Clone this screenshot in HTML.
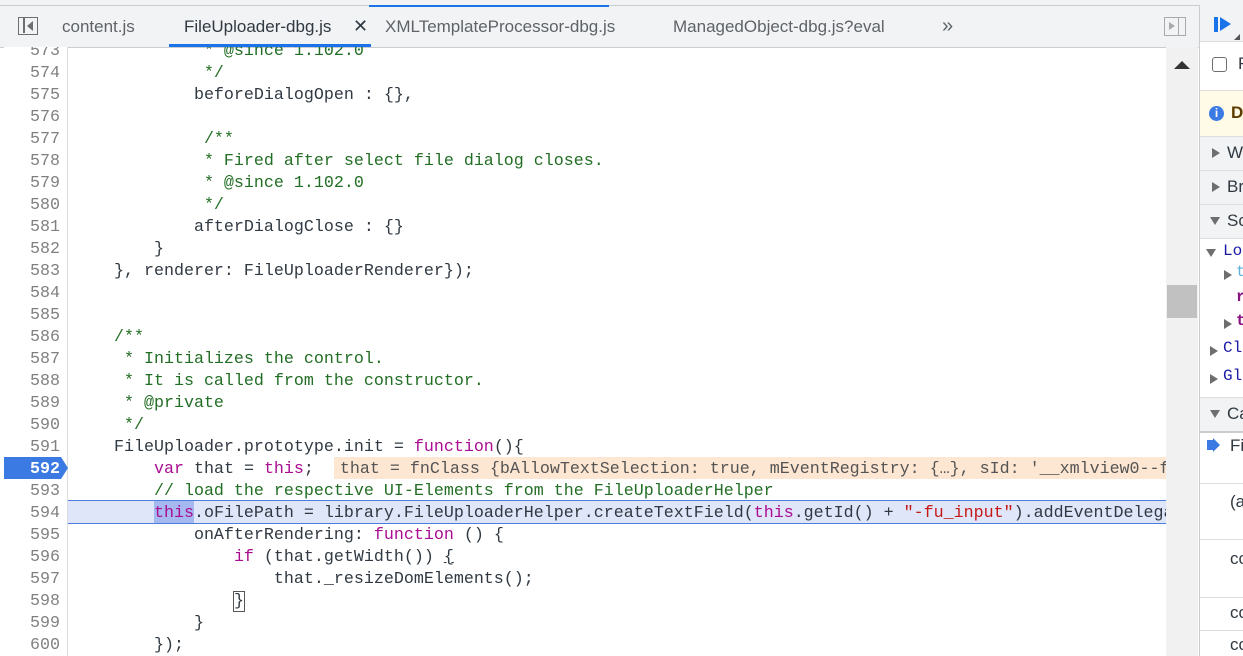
<!DOCTYPE html>
<html><head><meta charset="utf-8"><style>
body{margin:0;width:1243px;height:656px;overflow:hidden;background:#fff;font-family:"Liberation Sans",sans-serif;position:relative}
.tabs{position:absolute;left:0;top:5px;width:1199px;height:41px;background:#f1f3f4;border-top:1px solid #cacdd1;border-bottom:1px solid #cacdd1}
.topstrip{position:absolute;left:0;top:0;width:1243px;height:5px;background:#f1f3f4}
.tab{position:absolute;top:11px;font-size:17px;color:#5f6368}
.code{position:absolute;left:0;top:47px;width:1166px;height:609px;overflow:hidden}
.gut{position:absolute;left:4px;top:0;width:63px;height:609px;border-right:1px solid #ddd;background:#fff}
.ln{position:absolute;height:22px;line-height:22px;font-family:"Liberation Mono",monospace;font-size:16.67px;white-space:pre}
.num{left:4px;width:56px;text-align:right;color:#808080}
.txt{left:74px;color:#303942}
.c{color:#236e25}.k{color:#aa0d91}.s{color:#c41a16}
.sb{position:absolute;left:1166px;top:47px;width:32px;height:609px;background:#f1f1f1}
.rp{position:absolute;left:1199px;top:5px;width:44px;height:651px;border-left:1px solid #cacdd1;background:#fff;font-size:17px;color:#303942;overflow:hidden}
.row{position:absolute;left:0;width:44px;border-bottom:1px solid #ddd;background:#f1f3f4}
.tri{position:absolute;width:0;height:0;border-top:5px solid transparent;border-bottom:5px solid transparent;border-left:8px solid #6e6e6e}
.trd{position:absolute;width:0;height:0;border-left:5px solid transparent;border-right:5px solid transparent;border-top:8px solid #6e6e6e}
</style></head><body>
<div class="topstrip"></div>
<div class="tabs">
 <div style="position:absolute;left:18px;top:11px;width:20px;height:18px;border:1.5px solid #6e6e6e;box-sizing:border-box"><div style="position:absolute;left:4px;top:0;width:1.5px;height:15px;background:#6e6e6e"></div><div style="position:absolute;left:8px;top:3px;border-top:5px solid transparent;border-bottom:5px solid transparent;border-right:6px solid #6e6e6e"></div></div>
 <div class="tab" style="left:62px">content.js</div>
 <div class="tab" style="left:184px;color:#303942">FileUploader-dbg.js</div>
 <div class="tab" style="left:353px;color:#303942;font-size:18px;top:10px">✕</div>
 <div style="position:absolute;left:169px;top:38px;width:202px;height:3px;background:#1a73e8"></div>
 <div style="position:absolute;left:369px;top:-1px;width:240px;height:2px;background:#1a73e8"></div>
 <div class="tab" style="left:385px">XMLTemplateProcessor-dbg.js</div>
 <div class="tab" style="left:673px">ManagedObject-dbg.js?eval</div>
 <div class="tab" style="left:942px;top:9px;font-size:20px">»</div>
 <div style="position:absolute;left:1164px;top:11px;width:22px;height:19px;border:1px solid #aaa;box-sizing:border-box"><div style="position:absolute;left:13px;top:0;width:1px;height:17px;background:#aaa"></div><div style="position:absolute;left:4px;top:4px;border-top:4px solid transparent;border-bottom:4px solid transparent;border-left:6px solid #aaa"></div></div>
</div>
<div class="code">
 <div style="position:absolute;left:67px;top:453px;width:1099px;height:22px;background:#e0e6fa;border-top:1px solid #4a7ee0;border-bottom:1px solid #4a7ee0"></div>
 <div style="position:absolute;left:154px;top:454px;width:40px;height:22px;background:#a6b8f0"></div>
 <div style="position:absolute;left:334px;top:410px;width:832px;height:22px;background:#fde6d2"></div>
 <div class="gut"></div>
 <div style="position:absolute;left:4px;top:410px;width:57px;height:22px;background:#3b7ae2"></div>
 <div style="position:absolute;left:61px;top:410px;border-top:11px solid transparent;border-bottom:11px solid transparent;border-left:7px solid #3b7ae2"></div>
 <div id="lines"></div>
</div>
<div class="sb"><div style="position:absolute;left:8px;top:14px;border-left:8px solid transparent;border-right:8px solid transparent;border-bottom:8px solid #333"></div><div style="position:absolute;left:1px;top:238px;width:30px;height:33px;background:#c1c1c1"></div></div>
<div class="rp">
 <div class="row" style="top:0;height:36px"><div style="position:absolute;left:14px;top:12px;width:4px;height:15px;background:#1a73e8"></div><div style="position:absolute;left:20px;top:12px;border-top:7.5px solid transparent;border-bottom:7.5px solid transparent;border-left:11px solid #1a73e8"></div><div style="position:absolute;left:34px;top:29px;border-left:6px solid transparent;border-bottom:6px solid #555"></div></div>
 <div style="position:absolute;top:37px;left:0;width:44px;height:48px;border-bottom:1px solid #ddd;background:#fff"><div style="position:absolute;left:12px;top:15px;width:13px;height:13px;border:1.5px solid #6e6e6e;border-radius:3px"></div><div style="position:absolute;left:38px;top:12px">F</div></div>
 <div style="position:absolute;top:86px;left:0;width:44px;height:45px;background:#fffbe6;border-bottom:1px solid #ddd"><div style="position:absolute;left:9px;top:15px;width:15px;height:15px;border-radius:50%;background:#3b7ae2;color:#fff;font-size:12px;font-weight:bold;text-align:center;line-height:15px">i</div><div style="position:absolute;left:31px;top:12px;font-weight:bold;color:#5c3c00">D</div></div>
 <div class="row" style="top:132px;height:33px"><div class="tri" style="left:12px;top:11px"></div><div style="position:absolute;left:27px;top:6px">W</div></div>
 <div class="row" style="top:166px;height:33px"><div class="tri" style="left:12px;top:11px"></div><div style="position:absolute;left:27px;top:6px">Br</div></div>
 <div class="row" style="top:200px;height:33px"><div class="trd" style="left:10px;top:12px"></div><div style="position:absolute;left:27px;top:6px">Sc</div></div>
 <div style="position:absolute;top:234px;left:0;width:44px;height:158px;background:#fff;font-family:'Liberation Mono',monospace;font-size:16px">
  <div class="trd" style="left:6px;top:10px"></div><div style="position:absolute;left:23px;top:3px;color:#1a1aa6">Lo</div>
  <div class="tri" style="left:24px;top:31px"></div><div style="position:absolute;left:36px;top:24px;color:#5db0d7">t</div>
  <div style="position:absolute;left:36px;top:49px;color:#881280;font-weight:bold">r</div>
  <div class="tri" style="left:24px;top:80px"></div><div style="position:absolute;left:36px;top:73px;color:#881280;font-weight:bold">t</div>
  <div class="tri" style="left:10px;top:107px"></div><div style="position:absolute;left:23px;top:100px;color:#1a1aa6">Cl</div>
  <div class="tri" style="left:10px;top:135px"></div><div style="position:absolute;left:23px;top:128px;color:#1a1aa6">Gl</div>
 </div>
 <div class="row" style="top:392px;height:33px;border-top:1px solid #ddd;border-bottom:2px solid #ccc"><div class="trd" style="left:10px;top:12px"></div><div style="position:absolute;left:27px;top:6px">Ca</div></div>
 <div style="position:absolute;top:428px;left:0;width:44px;height:50px;border-bottom:1px solid #ddd"><div style="position:absolute;left:7px;top:7px;width:6px;height:10px;background:#3b7ae2"></div><div style="position:absolute;left:13px;top:5px;border-top:7px solid transparent;border-bottom:7px solid transparent;border-left:7px solid #3b7ae2"></div><div style="position:absolute;left:30px;top:3px">Fi</div></div>
 <div style="position:absolute;top:479px;left:0;width:44px;height:55px;border-bottom:1px solid #ddd"><div style="position:absolute;left:30px;top:8px">(a</div></div>
 <div style="position:absolute;top:535px;left:0;width:44px;height:57px;border-bottom:1px solid #ddd"><div style="position:absolute;left:30px;top:9px">co</div></div>
 <div style="position:absolute;top:593px;left:0;width:44px;height:32px;border-bottom:1px solid #ddd"><div style="position:absolute;left:30px;top:5px">co</div></div>
 <div style="position:absolute;left:30px;top:630px">co</div>
</div>
<script>
var L=[
[573,'<span class="c">             * @since 1.102.0</span>'],
[574,'<span class="c">             */</span>'],
[575,'            beforeDialogOpen : {},'],
[576,''],
[577,'<span class="c">             /**</span>'],
[578,'<span class="c">             * Fired after select file dialog closes.</span>'],
[579,'<span class="c">             * @since 1.102.0</span>'],
[580,'<span class="c">             */</span>'],
[581,'            afterDialogClose : {}'],
[582,'        }'],
[583,'    }, renderer: FileUploaderRenderer});'],
[584,''],[585,''],
[586,'<span class="c">    /**</span>'],
[587,'<span class="c">     * Initializes the control.</span>'],
[588,'<span class="c">     * It is called from the constructor.</span>'],
[589,'<span class="c">     * @private</span>'],
[590,'<span class="c">     */</span>'],
[591,'    FileUploader.prototype.init = <span class="k">function</span>(){'],
[592,'        <span class="k">var</span> that = <span class="k">this</span>;  <span style="color:#555;padding-left:6px">that = fnClass {bAllowTextSelection: true, mEventRegistry: {…}, sId: \'__xmlview0--fu</span>'],
[593,'<span class="c">        // load the respective UI-Elements from the FileUploaderHelper</span>'],
[594,'        <span class="k">this</span>.oFilePath = library.FileUploaderHelper.createTextField(<span class="k">this</span>.getId() + <span class="s">"-fu_input"</span>).addEventDelegate({'],
[595,'            onAfterRendering: <span class="k">function</span> () {'],
[596,'                <span class="k">if</span> (that.getWidth()) <span style="text-decoration:underline">{</span>'],
[597,'                    that._resizeDomElements();'],
[598,'                <span style="outline:1px solid #555">}</span>'],
[599,'            }'],
[600,'        });']];
var h='';
L.forEach(function(r){var t=(r[0]-573)*22-6;var nc=r[0]==592?'color:#fff;font-weight:bold':'';
h+='<div class="ln num" style="top:'+t+'px;'+nc+'">'+r[0]+'</div><div class="ln txt" style="top:'+t+'px">'+r[1]+'</div>';});
document.getElementById('lines').innerHTML=h;
</script>
</body></html>
